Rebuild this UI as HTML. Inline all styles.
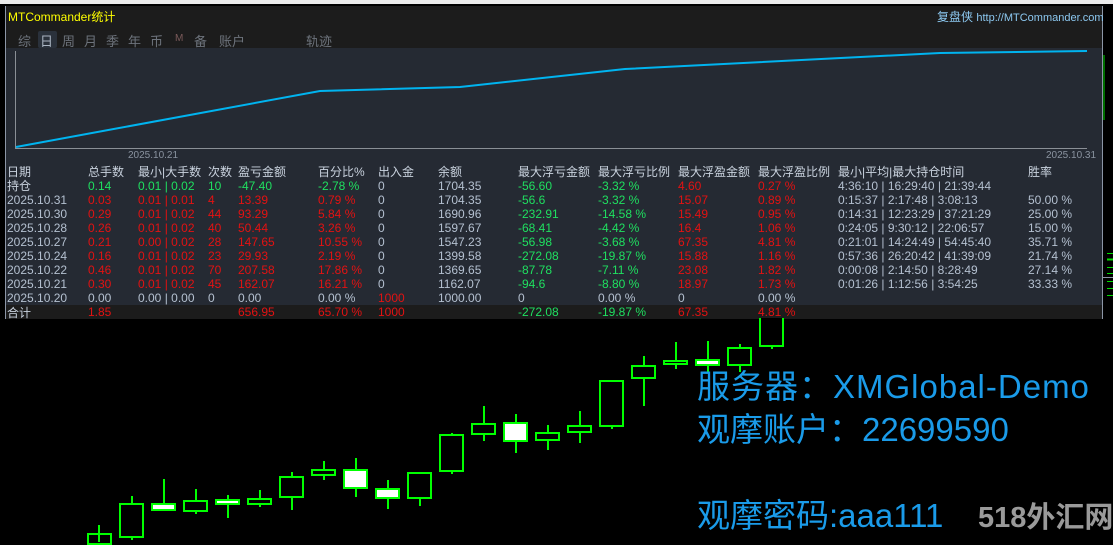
<!DOCTYPE html>
<html><head><meta charset="utf-8"><style>
*{margin:0;padding:0;box-sizing:border-box}
body{width:1113px;height:542px;background:#000;position:relative;overflow:hidden;font-family:"Liberation Sans","Noto Sans CJK SC",sans-serif}
.a{position:absolute;white-space:nowrap}
#top{left:0;top:0;width:1113px;height:4px;background:#ececec}
#panel{left:5px;top:6px;width:1098px;height:313px;background:#252a33;border:1px solid #8c96a6;border-top:none}
#tb{left:6px;top:6px;width:1096px;height:42px;background:#1c1c1c}
.t{font-size:12px;line-height:14px}
.h{color:#c9d2de}
.g{color:#1fe060}
.r{color:#e31212}
.w{color:#b4c0d0}
.tab{font-size:13px;color:#6d737c;top:31px}
.big{font-family:"Liberation Sans","Noto Sans CJK SC",sans-serif;color:#1a9be9;font-size:33px;line-height:38px}
.c{position:absolute;border:2px solid #00ff00}
.k{position:absolute;width:2px;background:#00ff00}
</style></head><body>
<div class="a" id="top"></div>
<div class="a" id="panel"></div>
<div class="a" id="tb"></div>
<div class="a t" style="left:8px;top:10px;color:#ffff00;font-size:12px">MTCommander统计</div>
<div class="a t" style="left:937px;top:10px;color:#8cc8f0;font-size:12px">复盘侠 <span style="font-size:11px">http://MTCommander.com</span></div>
<div class="a" style="left:38px;top:31px;width:19px;height:17px;background:#2a313b;border-radius:2px"></div>
<div class="a tab" style="left:18px">综</div>
<div class="a tab" style="left:40px;color:#aab4c2">日</div>
<div class="a tab" style="left:62px">周</div>
<div class="a tab" style="left:84px">月</div>
<div class="a tab" style="left:106px">季</div>
<div class="a tab" style="left:128px">年</div>
<div class="a tab" style="left:150px">币</div>
<div class="a tab" style="left:175px;font-size:10px;top:33px;color:#7a5a5a">M</div>
<div class="a tab" style="left:194px">备</div>
<div class="a tab" style="left:219px">账户</div>
<div class="a tab" style="left:306px">轨迹</div>
<svg class="a" style="left:0;top:0" width="1113" height="542">
<line x1="15.5" y1="51" x2="15.5" y2="149" stroke="#8a8f96" stroke-width="1"/>
<line x1="15" y1="148.5" x2="1087" y2="148.5" stroke="#8a8f96" stroke-width="1"/>
<polyline points="16,147 320,91 460,87 625,69 940,53 1087,51" fill="none" stroke="#00b4f0" stroke-width="2"/>
<line x1="1104" y1="55" x2="1104" y2="120" stroke="#00dd00" stroke-width="1"/>
<line x1="1103" y1="277.5" x2="1113" y2="277.5" stroke="#8c96a6"/>
<g stroke="#00dd00"><line x1="1107" y1="253.5" x2="1113" y2="253.5"/><line x1="1107" y1="259.5" x2="1113" y2="259.5" stroke-width="2"/><line x1="1107" y1="267.5" x2="1113" y2="267.5"/><line x1="1107" y1="273.5" x2="1113" y2="273.5"/><line x1="1107" y1="281.5" x2="1113" y2="281.5"/><line x1="1107" y1="288.5" x2="1113" y2="288.5"/><line x1="1107" y1="295.5" x2="1113" y2="295.5"/></g>
</svg>
<div class="a" style="left:128px;top:150px;font-size:10px;color:#8a93a0">2025.10.21</div>
<div class="a" style="left:1046px;top:150px;font-size:10px;color:#8a93a0">2025.10.31</div>
<div class="a" style="left:6px;top:305px;width:1096px;height:14px;background:#1c1c1c"></div>

<div class="a t h" style="left:7px;top:165px">日期<br><span style="color:#c9d2de">持仓</span></div>
<div class="a t w" style="left:7px;top:193px">2025.10.31<br>2025.10.30<br>2025.10.28<br>2025.10.27<br>2025.10.24<br>2025.10.22<br>2025.10.21<br>2025.10.20</div>
<div class="a t h" style="left:7px;top:306px">合计</div>

<div class="a t" style="left:88px;top:165px"><span class="h">总手数</span><br><span class="g">0.14</span><br><span class="r">0.03<br>0.29<br>0.26<br>0.21<br>0.16<br>0.46<br>0.30</span><br><span class="w">0.00</span><br><span class="r">1.85</span></div>
<div class="a t" style="left:138px;top:165px"><span class="h">最小|大手数</span><br><span class="g">0.01 | 0.02</span><br><span class="r">0.01 | 0.01<br>0.01 | 0.02<br>0.01 | 0.02<br>0.00 | 0.02<br>0.01 | 0.02<br>0.01 | 0.02<br>0.01 | 0.02</span><br><span class="w">0.00 | 0.00</span></div>
<div class="a t" style="left:208px;top:165px"><span class="h">次数</span><br><span class="g">10</span><br><span class="r">4<br>44<br>40<br>28<br>23<br>70<br>45</span><br><span class="w">0</span></div>
<div class="a t" style="left:238px;top:165px"><span class="h">盈亏金额</span><br><span class="g">-47.40</span><br><span class="r">13.39<br>93.29<br>50.44<br>147.65<br>29.93<br>207.58<br>162.07</span><br><span class="w">0.00</span><br><span class="r">656.95</span></div>
<div class="a t" style="left:318px;top:165px"><span class="h">百分比%</span><br><span class="g">-2.78 %</span><br><span class="r">0.79 %<br>5.84 %<br>3.26 %<br>10.55 %<br>2.19 %<br>17.86 %<br>16.21 %</span><br><span class="w">0.00 %</span><br><span class="r">65.70 %</span></div>
<div class="a t" style="left:378px;top:165px"><span class="h">出入金</span><br><span class="w">0<br>0<br>0<br>0<br>0<br>0<br>0<br>0</span><br><span class="r">1000<br>1000</span></div>
<div class="a t" style="left:438px;top:165px"><span class="h">余额</span><br><span class="w">1704.35<br>1704.35<br>1690.96<br>1597.67<br>1547.23<br>1399.58<br>1369.65<br>1162.07<br>1000.00</span></div>
<div class="a t" style="left:518px;top:165px"><span class="h">最大浮亏金额</span><br><span class="g">-56.60<br>-56.6<br>-232.91<br>-68.41<br>-56.98<br>-272.08<br>-87.78<br>-94.6</span><br><span class="w">0</span><br><span class="g">-272.08</span></div>
<div class="a t" style="left:598px;top:165px"><span class="h">最大浮亏比例</span><br><span class="g">-3.32 %<br>-3.32 %<br>-14.58 %<br>-4.42 %<br>-3.68 %<br>-19.87 %<br>-7.11 %<br>-8.80 %</span><br><span class="w">0.00 %</span><br><span class="g">-19.87 %</span></div>
<div class="a t" style="left:678px;top:165px"><span class="h">最大浮盈金额</span><br><span class="r">4.60<br>15.07<br>15.49<br>16.4<br>67.35<br>15.88<br>23.08<br>18.97</span><br><span class="w">0</span><br><span class="r">67.35</span></div>
<div class="a t" style="left:758px;top:165px"><span class="h">最大浮盈比例</span><br><span class="r">0.27 %<br>0.89 %<br>0.95 %<br>1.06 %<br>4.81 %<br>1.16 %<br>1.82 %<br>1.73 %</span><br><span class="w">0.00 %</span><br><span class="r">4.81 %</span></div>
<div class="a t" style="left:838px;top:165px"><span class="h">最小|平均|最大持仓时间</span><br><span class="w">4:36:10 | 16:29:40 | 21:39:44<br>0:15:37 | 2:17:48 | 3:08:13<br>0:14:31 | 12:23:29 | 37:21:29<br>0:24:05 | 9:30:12 | 22:06:57<br>0:21:01 | 14:24:49 | 54:45:40<br>0:57:36 | 26:20:42 | 41:39:09<br>0:00:08 | 2:14:50 | 8:28:49<br>0:01:26 | 1:12:56 | 3:54:25</span></div>
<div class="a t" style="left:1028px;top:165px"><span class="h">胜率</span><br><br><span class="w">50.00 %<br>25.00 %<br>15.00 %<br>35.71 %<br>21.74 %<br>27.14 %<br>33.33 %</span></div>

<!-- candles -->
<div class="k" style="left:98px;top:525px;height:17px"></div><div class="c" style="left:87px;top:533px;width:25px;height:12px"></div>
<div class="k" style="left:131px;top:496px;height:44px"></div><div class="c" style="left:119px;top:503px;width:25px;height:35px;background:#000"></div>
<div class="k" style="left:163px;top:479px;height:24px"></div><div class="c" style="left:151px;top:503px;width:25px;height:8px;background:#fff"></div>
<div class="k" style="left:195px;top:489px;height:25px"></div><div class="c" style="left:183px;top:500px;width:25px;height:12px;background:#000"></div>
<div class="k" style="left:227px;top:495px;height:23px"></div><div class="c" style="left:215px;top:499px;width:25px;height:6px;background:#fff"></div>
<div class="k" style="left:259px;top:490px;height:17px"></div><div class="c" style="left:247px;top:498px;width:25px;height:7px;background:#000"></div>
<div class="k" style="left:291px;top:472px;height:38px"></div><div class="c" style="left:279px;top:476px;width:25px;height:22px;background:#000"></div>
<div class="k" style="left:323px;top:461px;height:19px"></div><div class="c" style="left:311px;top:469px;width:25px;height:7px;background:#000"></div>
<div class="k" style="left:355px;top:458px;height:39px"></div><div class="c" style="left:343px;top:469px;width:25px;height:20px;background:#fff"></div>
<div class="k" style="left:387px;top:480px;height:29px"></div><div class="c" style="left:375px;top:488px;width:25px;height:11px;background:#fff"></div>
<div class="k" style="left:419px;top:490px;height:16px"></div><div class="c" style="left:407px;top:472px;width:25px;height:27px;background:#000"></div>
<div class="k" style="left:451px;top:433px;height:41px"></div><div class="c" style="left:439px;top:434px;width:25px;height:38px;background:#000"></div>
<div class="k" style="left:483px;top:406px;height:35px"></div><div class="c" style="left:471px;top:423px;width:25px;height:12px;background:#000"></div>
<div class="k" style="left:515px;top:414px;height:39px"></div><div class="c" style="left:503px;top:422px;width:25px;height:20px;background:#fff"></div>
<div class="k" style="left:547px;top:425px;height:25px"></div><div class="c" style="left:535px;top:432px;width:25px;height:9px;background:#000"></div>
<div class="k" style="left:579px;top:411px;height:32px"></div><div class="c" style="left:567px;top:425px;width:25px;height:8px;background:#000"></div>
<div class="k" style="left:611px;top:420px;height:9px"></div><div class="c" style="left:599px;top:380px;width:25px;height:47px;background:#000"></div>
<div class="k" style="left:643px;top:356px;height:50px"></div><div class="c" style="left:631px;top:365px;width:25px;height:14px;background:#000"></div>
<div class="k" style="left:675px;top:342px;height:27px"></div><div class="c" style="left:663px;top:360px;width:25px;height:5px;background:#000"></div>
<div class="k" style="left:707px;top:341px;height:31px"></div><div class="c" style="left:695px;top:359px;width:25px;height:7px;background:#fff"></div>
<div class="k" style="left:739px;top:344px;height:28px"></div><div class="c" style="left:727px;top:347px;width:25px;height:19px;background:#000"></div>
<div class="k" style="left:771px;top:330px;height:19px"></div><div class="c" style="left:759px;top:318px;width:25px;height:29px;border-top:none;background:#000"></div>

<div class="a big" style="left:697px;top:368px;letter-spacing:1px">服务器：XMGlobal-Demo</div>
<div class="a big" style="left:697px;top:411px">观摩账户：22699590</div>
<div class="a big" style="left:697px;top:497px">观摩密码:aaa111</div>
<div class="a" style="left:978px;top:501px;font-size:29px;font-weight:bold;color:#9a9a9a;line-height:34px">518外汇网</div>
</body></html>
